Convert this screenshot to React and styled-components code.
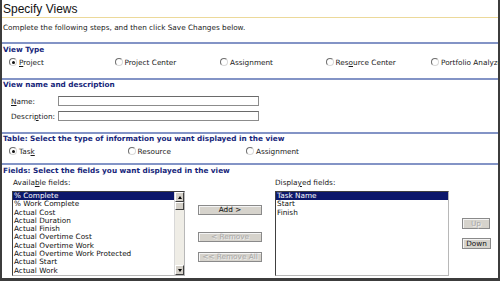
import React from 'react'
import styled, { createGlobalStyle } from 'styled-components'

const GlobalStyle = createGlobalStyle`
  html, body { margin: 0; padding: 0; background: #fff; }
  * { box-sizing: border-box; }
`

const navy = '#16257a'
const rule = '#8394c6'
const body = '"DejaVu Sans", Verdana, sans-serif'

const Frame = styled.div`
  width: 500px;
  height: 281px;
  overflow: hidden;
  display: flex;
  flex-direction: column;
  border-left: 2px solid #3c3c3c;
  border-right: 2px solid #3c3c3c;
  border-bottom: 3px solid #3c3c3c;
  font-family: ${body};
  font-size: 7.3px;
  color: #1a1a1a;
`
const TitleBar = styled.div`
  height: 18px;
  padding: 2px 0 0 1px;
  border-bottom: 1px solid #ecd99a;
  font-family: "Liberation Sans", Arial, sans-serif;
  font-size: 12px;
  line-height: 14px;
  color: #111;
`
const Intro = styled.div`
  height: 24px;
  padding: 5px 0 0 1px;
  line-height: 10px;
`
const Section = styled.div`
  height: ${props => props.h}px;
  flex: ${props => (props.grow ? '1 1 auto' : '0 0 auto')};
  border-top: 2px solid ${rule};
  display: flex;
  flex-direction: column;
`
const Heading = styled.div`
  height: ${props => props.h || 10}px;
  padding-left: 1px;
  line-height: ${props => props.h || 10}px;
  font-weight: bold;
  color: ${navy};
  white-space: nowrap;
`
const RadioRow = styled.div`
  display: grid;
  grid-template-columns: repeat(${props => props.cols}, ${props => props.w}px);
  padding: ${props => props.top}px 0 0 7px;
  white-space: nowrap;
`
const RadioItem = styled.label`
  display: flex;
  align-items: center;
  height: 10px;
  gap: 2px;
`
const RadioDot = styled.span`
  width: 8px;
  height: 8px;
  border-radius: 50%;
  border: 1px solid;
  border-color: #6e6e6e #d8d8d8 #d8d8d8 #6e6e6e;
  background: #fff;
  display: flex;
  align-items: center;
  justify-content: center;
  &::after {
    content: '';
    width: 3px;
    height: 3px;
    border-radius: 50%;
    background: ${props => (props.checked ? '#111' : 'transparent')};
  }
`
const Key = styled.span`text-decoration: underline;`

const FormGrid = styled.div`
  display: grid;
  grid-template-columns: 47px 201px;
  grid-auto-rows: 10px;
  row-gap: 5px;
  padding: 6px 0 0 9px;
  align-items: center;
`
const TextBox = styled.div`
  height: 10px;
  border: 1px solid #8c8c8c;
  border-top-color: #6a6a6a;
  background: #fff;
`

const Fields = styled.div`
  display: grid;
  grid-template-columns: 173px 64px 174px 29px;
  grid-template-rows: 15px 1fr;
  column-gap: 13px;
  padding-left: 10px;
  flex: 1;
`
const FieldLabel = styled.div`
  padding: 2px 0 0 ${props => props.indent || 0}px;
  line-height: 10px;
`
const ListBox = styled.div`
  height: 85px;
  border: 1px solid;
  border-color: #404040 #b8b8b8 #b8b8b8 #404040;
  background: #fff;
  display: flex;
`
const Items = styled.div`
  flex: 1;
  min-width: 0;
`
const Item = styled.div`
  height: 8.3px;
  line-height: 8.3px;
  padding-left: 1px;
  white-space: nowrap;
  background: ${props => (props.selected ? '#0c176b' : 'transparent')};
  color: ${props => (props.selected ? '#fff' : '#111')};
`
const ScrollBar = styled.div`
  width: 10px;
  display: flex;
  flex-direction: column;
  background: #efede6;
  border-left: 1px solid #d8d8d8;
`
const ArrowBox = styled.div`
  height: 10px;
  background: #d4d0c8;
  border: 1px solid;
  border-color: #fff #404040 #404040 #fff;
  display: flex;
  align-items: center;
  justify-content: center;
  &::after {
    content: '';
    border-left: 2.5px solid transparent;
    border-right: 2.5px solid transparent;
    ${props => (props.down ? 'border-top: 3px solid #000;' : 'border-bottom: 3px solid #000;')}
  }
`
const Thumb = styled.div`
  height: 8px;
  background: #d4d0c8;
  border: 1px solid;
  border-color: #fff #404040 #404040 #fff;
`
const Track = styled.div`flex: 1;`

const ButtonCol = styled.div`
  display: flex;
  flex-direction: column;
  padding-top: ${props => props.top}px;
`
const Button = styled.div`
  height: ${props => props.h || 10}px;
  width: ${props => props.w || 64}px;
  margin-top: ${props => props.mt || 0}px;
  background: #d6d3cc;
  border: 1px solid #8a8a8a;
  box-shadow: inset 1px 1px 0 #f4f4f4;
  display: flex;
  align-items: center;
  justify-content: center;
  line-height: 1;
  color: ${props => (props.disabled ? '#a9a9a9' : '#111')};
  text-shadow: ${props => (props.disabled ? '1px 1px 0 #f0f0f0' : 'none')};
  white-space: nowrap;
`

const viewTypes = [
  { label: <><Key>P</Key>roject</>, checked: true },
  { label: 'Project Center' },
  { label: 'Assignment' },
  { label: <>Res<Key>o</Key>urce Center</> },
  { label: 'Portfolio Analyzer' }
]

const tableTypes = [
  { label: <>Tas<Key>k</Key></>, checked: true },
  { label: 'Resource' },
  { label: 'Assignment' }
]

const available = [
  '% Complete',
  '% Work Complete',
  'Actual Cost',
  'Actual Duration',
  'Actual Finish',
  'Actual Overtime Cost',
  'Actual Overtime Work',
  'Actual Overtime Work Protected',
  'Actual Start',
  'Actual Work'
]

const displayed = ['Task Name', 'Start', 'Finish']

const Radios = ({ items, cols, w, top }) => (
  <RadioRow cols={cols} w={w} top={top}>
    {items.map((item, i) => (
      <RadioItem key={i}>
        <RadioDot checked={item.checked} />
        <span>{item.label}</span>
      </RadioItem>
    ))}
  </RadioRow>
)

export default function App() {
  return (
    <>
      <GlobalStyle />
      <Frame>
        <TitleBar>Specify Views</TitleBar>
        <Intro>Complete the following steps, and then click Save Changes below.</Intro>

        <Section h={36}>
          <Heading h={11}>View Type</Heading>
          <Radios items={viewTypes} cols={5} w={105.5} top={2} />
        </Section>

        <Section h={54}>
          <Heading>View name and description</Heading>
          <FormGrid>
            <span><Key>N</Key>ame:</span>
            <TextBox />
            <span>Descri<Key>p</Key>tion:</span>
            <TextBox />
          </FormGrid>
        </Section>

        <Section h={31}>
          <Heading h={9}>Table: Select the type of information you want displayed in the view</Heading>
          <Radios items={tableTypes} cols={3} w={118.5} top={3} />
        </Section>

        <Section grow>
          <Heading h={11}>Fields: Select the fields you want displayed in the view</Heading>
          <Fields>
            <FieldLabel indent={1}>Availa<Key>b</Key>le fields:</FieldLabel>
            <div />
            <FieldLabel>Displa<Key>y</Key>ed fields:</FieldLabel>
            <div />

            <ListBox>
              <Items>
                {available.map((name, i) => (
                  <Item key={name} selected={i === 0}>{name}</Item>
                ))}
              </Items>
              <ScrollBar>
                <ArrowBox />
                <Thumb />
                <Track />
                <ArrowBox down />
              </ScrollBar>
            </ListBox>

            <ButtonCol top={14}>
              <Button>Add &gt;</Button>
              <Button disabled mt={17}>&lt; Remove</Button>
              <Button disabled mt={10}>&lt;&lt; Remove All</Button>
            </ButtonCol>

            <ListBox>
              <Items>
                {displayed.map((name, i) => (
                  <Item key={name} selected={i === 0}>{name}</Item>
                ))}
              </Items>
            </ListBox>

            <ButtonCol top={27}>
              <Button disabled w={28} h={11}>Up</Button>
              <Button w={29} h={11} mt={9}>Down</Button>
            </ButtonCol>
          </Fields>
        </Section>
      </Frame>
    </>
  )
}
